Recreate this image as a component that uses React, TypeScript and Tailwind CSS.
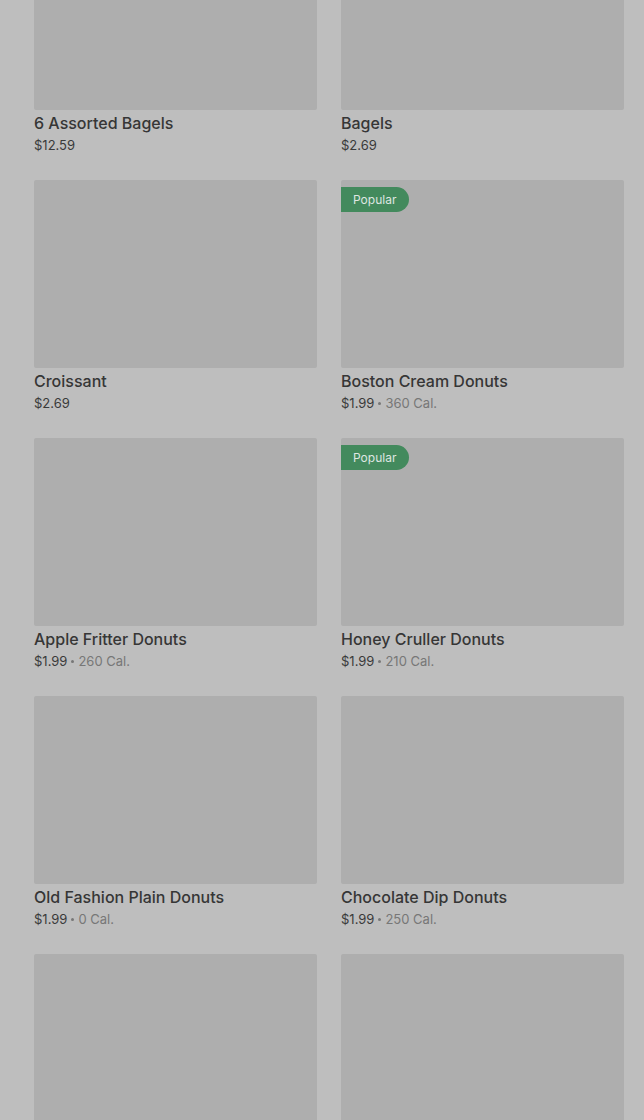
const items = [
  { name: '6 Assorted Bagels', price: '$12.59' },
  { name: 'Bagels', price: '$2.69' },
  { name: 'Croissant', price: '$2.69' },
  { name: 'Boston Cream Donuts', price: '$1.99', cal: '360 Cal.', popular: true },
  { name: 'Apple Fritter Donuts', price: '$1.99', cal: '260 Cal.' },
  { name: 'Honey Cruller Donuts', price: '$1.99', cal: '210 Cal.', popular: true },
  { name: 'Old Fashion Plain Donuts', price: '$1.99', cal: '0 Cal.' },
  { name: 'Chocolate Dip Donuts', price: '$1.99', cal: '250 Cal.' },
]

type Item = { name: string; price: string; cal?: string; popular?: boolean }

function Card({ item }: { item: Item }) {
  return (
    <div className="flex flex-col">
      <div className="relative h-[188px] bg-[#aeaeae] rounded-[2px]">
        {item.popular && (
          <span className="absolute left-0 top-[7px] h-[25px] w-[68px] flex items-center pl-[12px] bg-[#438a5d] text-[#dfe6e1] text-[12px] rounded-r-full">
            Popular
          </span>
        )}
      </div>
      <div className="mt-[3px] text-[16px] leading-5 font-medium text-[#363636]">
        {item.name}
      </div>
      <div className="mt-[3px] flex items-center gap-[4px] text-[13px] leading-[18px] text-[#3a3a3a]">
        <span>{item.price}</span>
        {item.cal && (
          <>
            <span className="w-[3px] h-[3px] rounded-full bg-[#777777]" />
            <span className="text-[#777777]">{item.cal}</span>
          </>
        )}
      </div>
    </div>
  )
}

export default function App() {
  return (
    <div className="h-[1120px] overflow-hidden bg-[#bebebe]" style={{ fontFamily: 'Inter, "Noto Sans", sans-serif' }}>
      <div className="grid grid-cols-2 gap-x-6 gap-y-[26px] pl-[34px] pr-[20px] mt-[-78px]">
        {items.map((item) => (
          <Card key={item.name} item={item} />
        ))}
        {/* next row, only the images are in view */}
        <div className="h-[188px] bg-[#aeaeae] rounded-[2px]" />
        <div className="h-[188px] bg-[#aeaeae] rounded-[2px]" />
      </div>
    </div>
  )
}
